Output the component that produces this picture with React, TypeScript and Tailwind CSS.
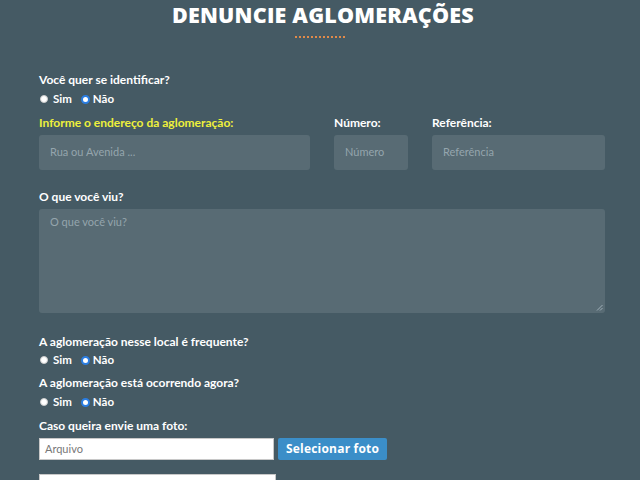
import React from "react";

function Radio({ checked }: { checked?: boolean }) {
  return checked ? (
    <span className="inline-flex h-[9px] w-[9px] items-center justify-center rounded-full border-[2px] border-[#2a7de1] bg-white">
    </span>
  ) : (
    <span className="inline-block h-[8px] w-[8px] rounded-full bg-white border border-[#ccc]" />
  );
}

function RadioRow() {
  return (
    <div className="flex items-center text-[11.5px] font-bold text-white h-[14px]">
      <span className="ml-[1px] flex items-center gap-[5px]">
        <Radio />
        <span>Sim</span>
      </span>
      <span className="ml-[9px] flex items-center gap-[3px]">
        <Radio checked />
        <span>Não</span>
      </span>
    </div>
  );
}

const labelCls = "text-[12px] font-bold text-white leading-[14px]";
const inputCls =
  "rounded-[3px] bg-[#586b74] text-[11px] text-[#95a5ad] px-[11px] flex items-center h-[35px]";

export default function App() {
  return (
    <div
      className="min-h-[480px] w-[640px] bg-[#455a64] overflow-hidden"
      style={{ fontFamily: "Lato, 'Open Sans', sans-serif" }}
    >
      <div className="flex flex-col items-center pt-[3px]">
        <h1
          className="ml-[6px] text-[21.5px] font-extrabold text-white tracking-[0.2px] leading-[24px]"
          style={{ fontFamily: "'Open Sans', sans-serif" }}
        >
          DENUNCIE AGLOMERAÇÕES
        </h1>
        <div className="mt-[9px] w-[50px] border-t-[2px] border-dotted border-[#e08a4a]" />
      </div>

      <div className="pl-[39px] pr-[35px] pt-[35px]">
        <div className={labelCls}>Você quer se identificar?</div>
        <div className="mt-[5px]">
          <RadioRow />
        </div>

        <div className="mt-[10px] flex gap-[24px]">
          <div className="w-[271px]">
            <div className={"text-[12px] font-bold leading-[14px] text-[#eef03c]"}>
              Informe o endereço da aglomeração:
            </div>
            <div className={inputCls + " mt-[5px]"}>Rua ou Avenida ...</div>
          </div>
          <div className="w-[74px]">
            <div className={labelCls}>Número:</div>
            <div className={inputCls + " mt-[5px]"}>Número</div>
          </div>
          <div className="flex-1">
            <div className={labelCls}>Referência:</div>
            <div className={inputCls + " mt-[5px]"}>Referência</div>
          </div>
        </div>

        <div className={labelCls + " mt-[20px]"}>O que você viu?</div>
        <div className="relative mt-[5px] h-[104px] rounded-[3px] bg-[#586b74] px-[11px] pt-[5px] text-[11px] text-[#95a5ad]">
          O que você viu?
          <svg
            className="absolute bottom-[2px] right-[2px]"
            width="7"
            height="7"
            viewBox="0 0 7 7"
          >
            <line x1="1" y1="6.5" x2="6.5" y2="1" stroke="#9fb0b8" strokeWidth="1" />
            <line x1="4" y1="6.5" x2="6.5" y2="4" stroke="#9fb0b8" strokeWidth="1" />
          </svg>
        </div>

        <div className={labelCls + " mt-[22px]"}>A aglomeração nesse local é frequente?</div>
        <div className="mt-[4px]">
          <RadioRow />
        </div>

        <div className={labelCls + " mt-[9px]"}>A aglomeração está ocorrendo agora?</div>
        <div className="mt-[5px]">
          <RadioRow />
        </div>

        <div className={labelCls + " mt-[10px]"}>Caso queira envie uma foto:</div>
        <div className="mt-[5px] flex items-center gap-[4px]">
          <div className="flex h-[22px] w-[235px] items-center border border-[#c8c8c8] bg-white px-[5px] text-[11px] text-[#777]">
            Arquivo
          </div>
          <div
            className="flex h-[22px] items-center rounded-[2px] bg-[#3b8ec8] px-[8px] text-[12px] font-bold text-white tracking-[0.2px]"
            style={{ fontFamily: "'Open Sans', sans-serif" }}
          >
            Selecionar foto
          </div>
        </div>
        <div className="mt-[14px] h-[22px] w-[237px] border border-[#c8c8c8] bg-white" />
      </div>
    </div>
  );
}
